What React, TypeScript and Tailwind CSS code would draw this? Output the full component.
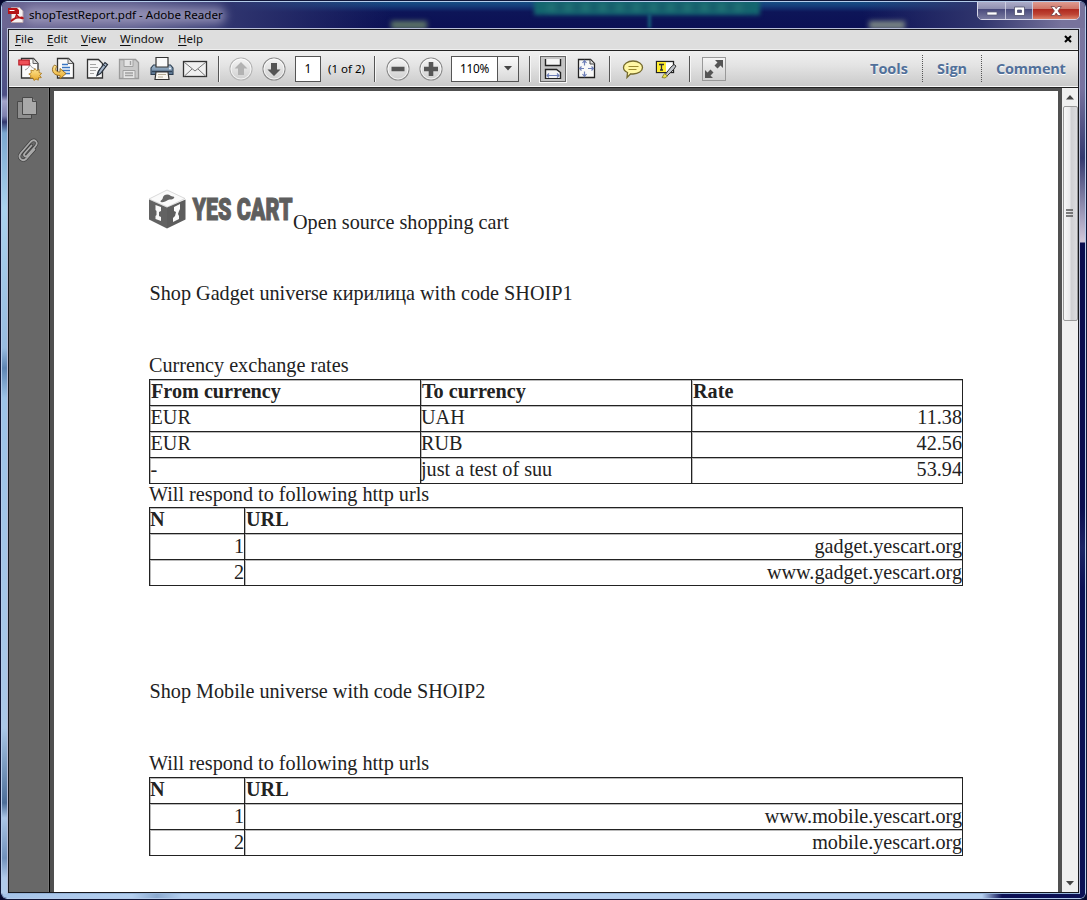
import React from "react";

const Sep = ({ className }: { className: string }) => (
  <div className={`h-[26px] w-[2px] shrink-0 border-l border-[#555] bg-[#f6f6f6] ${className}`} />
);

const Round = ({ className, children, faded }: { className: string; children: React.ReactNode; faded?: boolean }) => (
  <svg className={`shrink-0 ${className}`} width="24" height="24" viewBox="0 0 24 24">
    <circle cx="12" cy="12" r="11" fill="url(#ring)" stroke={faded ? "#b4b4b4" : "#8a8a8a"} strokeWidth="1.1" />
    <circle cx="12" cy="12" r="10" fill="none" stroke="#fff" strokeOpacity=".7" />
    <g fill={faded ? "#b2b2b2" : "#555"}>{children}</g>
  </svg>
);

const PdfIcon = () => (
  <svg className="shrink-0" width="16" height="16" viewBox="0 0 16 16">
    <path d="M3.500.5h8l3.500 3.500v11.500H3.500z" fill="#f5f1f1" stroke="#b9a5ac" />
    <path d="M0 1h9l2 2v4H0z" fill="#b51418" />
    <path d="M4 13.500c3-1.500 5-5 5-9 0-2-1.500-1-1 1 .6 3 3 5.500 6 6 1.800.2 1-1.500-1-1.300-3 .2-6 .8-8.500 2.300-1.500 1-1.500 2-.5 1z" fill="none" stroke="#b51418" strokeWidth="1.500" />
    <path d="M1.500 3.500h5" stroke="#fff" strokeWidth="1.200" />
  </svg>
);

const Title = () => (
  <div className="relative flex h-[26px] shrink-0 items-center overflow-hidden bg-[linear-gradient(180deg,#174e84_0,#153c79_4px,#0d1558_10px,#0c1054_100%)]">
    <div className="absolute inset-0 bg-[linear-gradient(90deg,#6c6693_0,#5d5d8d_130px,#30356f_225px,transparent_390px,transparent_860px,#30356d_980px,#77739c_1060px)]" />
    <div className="absolute top-[5px] left-[22px] h-[17px] w-[202px] rounded-full bg-[#aaa5c5]/70 blur-[5px]" />
    <div className="absolute -top-[3px] left-[532px] h-[16px] w-[226px] bg-[#14666f] blur-[2px]" />
    <div className="absolute top-[3px] left-[545px] h-[5px] w-[200px] bg-[repeating-linear-gradient(90deg,#2b7b7a_0_9px,#175368_9px_17px)] blur-[3px]" />
    <div className="absolute top-[12px] left-[646px] h-[14px] w-[3px] bg-[#165f7a] blur-[1.500px]" />
    <div className="absolute top-[19px] left-[389px] h-[8px] w-[36px] bg-[#5c7467] blur-[2.500px]" />
    <div className="absolute top-[19px] left-[867px] h-[8px] w-[36px] bg-[#7a8584] blur-[2.500px]" />
    <div className="relative mb-px ml-[6px] flex items-center gap-[5px]">
      <PdfIcon />
      <span className="w-[200px] whitespace-nowrap text-[11.600px] leading-4 text-black">shopTestReport.pdf - Adobe Reader</span>
    </div>
    <div className="absolute top-[-3px] right-[5px] flex h-[21px] overflow-hidden rounded-b-[5px] border border-[#d8d8e8] text-white">
      <div className="flex w-[28px] justify-center border-r border-[#d8d8e8]/80 bg-[linear-gradient(180deg,#b6b5cf_0,#8e8eb0_48%,#4a4b7d_50%,#787a9f_100%)]">
        <svg width="27" height="20"><path d="M9 12h10v3H9z" fill="#fff" stroke="#555770" strokeWidth=".7" /></svg>
      </div>
      <div className="flex w-[27px] justify-center border-r border-[#d8d8e8]/80 bg-[linear-gradient(180deg,#b6b5cf_0,#8e8eb0_48%,#4a4b7d_50%,#787a9f_100%)]">
        <svg width="26" height="20"><path fillRule="evenodd" d="M8.500 7h10v8.500h-10zM11.500 10v2.500h4V10z" fill="#fff" stroke="#50526c" strokeWidth=".8" /></svg>
      </div>
      <div className="flex w-[46px] justify-center bg-[linear-gradient(180deg,#e3a69c_0,#cf7466_48%,#b02a20_50%,#bd4334_75%,#dc8169_100%)]">
        <svg width="46" height="20"><path d="M18 6.500h3.500l1.700 2.200 1.700-2.200h3.500l-3.400 4.400 3.400 4.600h-3.500l-1.700-2.400-1.700 2.400H18l3.400-4.600z" fill="#fff" stroke="#734249" strokeWidth=".8" /></svg>
      </div>
    </div>
  </div>
);

const Item = ({ k, rest, className }: { k: string; rest: string; className: string }) => (
  <span className={className}><u className="underline-offset-2">{k}</u>{rest}</span>
);

const Menu = () => (
  <div className="flex h-[20px] shrink-0 items-center border-b border-white/50 bg-[#dedede] pb-[2px] pl-[6px] text-[11.500px] text-[#111]">
    <Item className="w-[32px]" k="F" rest="ile" />
    <Item className="w-[34px]" k="E" rest="dit" />
    <Item className="w-[39px]" k="V" rest="iew" />
    <Item className="w-[58px]" k="W" rest="indow" />
    <Item className="w-[40px]" k="H" rest="elp" />
    <svg className="mt-px mr-[6px] ml-auto" width="8" height="8" viewBox="0 0 8 8"><path d="M1 1l6 6M7 1L1 7" stroke="#000" strokeWidth="2.100" /></svg>
  </div>
);

const Toolbar = () => (
  <div className="flex h-[36px] shrink-0 items-center border-b border-[#f5f5f5] bg-[linear-gradient(180deg,#f0f0f0_0,#e4e4e4_40%,#cacaca_100%)] text-black">
    <svg width="0" height="0" className="absolute">
      <defs>
        <linearGradient id="ring" x1="0" y1="0" x2="0" y2="1"><stop offset="0" stopColor="#f5f5f5" /><stop offset="1" stopColor="#cfcfcf" /></linearGradient>
        <linearGradient id="gold" x1="0" y1="0" x2="0" y2="1"><stop offset="0" stopColor="#ffe896" /><stop offset="1" stopColor="#e9a92b" /></linearGradient>
        <linearGradient id="steel" x1="0" y1="0" x2="0" y2="1"><stop offset="0" stopColor="#a8bfd4" /><stop offset="1" stopColor="#587390" /></linearGradient>
      </defs>
    </svg>
    <svg className="ml-[9px] shrink-0" width="25" height="25" viewBox="0 0 25 25">
      <path d="M3.500 2.500h12l4.500 5v14.500H3.500z" fill="#fbfbfb" stroke="#333" strokeWidth="1.300" />
      <path d="M15 2.500v5h5" fill="#ddd" stroke="#666" />
      <path d="M7 14c3-1 5-4 5-7M12 9c1 2 3 3 5 4" stroke="#999" fill="none" />
      <rect x=".8" y="4" width="10.500" height="5" fill="#ee5158" stroke="#b3141e" />
      <path d="M17 12.500l1.500 2.200 2.800-1-.3 2.800 2.700.9-2 1.900 1.600 2.300-2.900.2-.1 2.400-2.300-1.200-2 1.500-1-2.500-2.900.1.900-2.500-2.200-1.500 2.500-1.300-.4-2.700 2.600.7z" fill="url(#gold)" stroke="#a87516" strokeWidth=".8" />
    </svg>
    <svg className="ml-[8px] shrink-0" width="25" height="25" viewBox="0 0 25 25">
      <path d="M6.500 2.500h11l5 5v14.500h-16z" fill="#fbfbfb" stroke="#333" strokeWidth="1.300" />
      <path d="M17 2.500v5h5" fill="#ddd" stroke="#666" />
      <path d="M11 8.500h6M11 11.500h8M11 14.500h8M13 17.500h6" stroke="#3b77c4" strokeWidth="1.300" />
      <path d="M3.500 9C0 12 .5 19.500 9 19.500V23l6-5.500-6-5V16c-4.500 0-5.500-3-3-5.500z" fill="url(#gold)" stroke="#8e671f" strokeWidth=".9" />
    </svg>
    <svg className="ml-[9px] shrink-0" width="24" height="25" viewBox="0 0 24 25">
      <path d="M2.500 3.500h11l4 4V22h-15z" fill="#f6f6f6" stroke="#333" strokeWidth="1.300" />
      <path d="M5 8.500h6M5 11.500h8M5 14.500h6M5 17.500h4" stroke="#a4a4a4" />
      <path d="M12 19.500l1.200-4L20 6.500l2.500 2-7 9z" fill="#a6b6c9" stroke="#29323e" strokeWidth="1.200" />
      <path d="M12 19.500l3-7M18 8.500l3 2.300" stroke="#29323e" />
    </svg>
    <svg className="ml-[9px] shrink-0" width="22" height="22" viewBox="0 0 22 22">
      <path d="M1.500 1.500h16l3 3v16h-19z" fill="#c9c9c9" stroke="#9b9b9b" strokeWidth="1.300" />
      <path d="M6 1.500h9v7H6zM5 12.500h12v8H5z" fill="#e5e5e5" stroke="#a0a0a0" />
      <path d="M12.500 3v4M7 15h8M7 17.500h8" stroke="#a0a0a0" strokeWidth="1.400" />
    </svg>
    <svg className="ml-[10px] shrink-0" width="24" height="25" viewBox="0 0 24 25">
      <path d="M3.500 9h17l2.500 3v6.500H1V12z" fill="url(#steel)" stroke="#2b3d51" strokeWidth="1.100" />
      <path d="M6 1.500h12V11H6z" fill="#fafafa" stroke="#333" strokeWidth="1.200" />
      <path d="M2 15.500h20" stroke="#304358" strokeWidth="1.600" />
      <path d="M6 16h12l1 7.500H5z" fill="#f8f6f0" stroke="#333" strokeWidth="1.200" />
      <path d="M8 18.500h8M8 21h5" stroke="#b7ad97" />
      <circle cx="20" cy="12.500" r=".9" fill="#fff" />
    </svg>
    <svg className="ml-[8px] shrink-0" width="26" height="18" viewBox="0 0 26 18">
      <rect x="1.500" y="1.500" width="23" height="15" fill="#f0f0f0" stroke="#333" strokeWidth="1.300" />
      <path d="M2 2l11 9L24 2M2.500 16L10 9M23.500 16L16 9" fill="none" stroke="#777" />
    </svg>
    <Sep className="ml-[10px]" />
    <Round className="ml-[9px]" faded><path d="M12 5l6.500 6.500H15V18H9v-6.500H5.500z" /></Round>
    <Round className="ml-[9px]"><path d="M12 19l-6.500-6.500H9V6h6v6.500h3.500z" /></Round>
    <div className="ml-[9px] flex h-[26px] w-[26px] shrink-0 items-center justify-center border-[1.500px] border-[#555] bg-white text-[12px]">1</div>
    <span className="ml-[7px] w-[46px] shrink-0 whitespace-nowrap text-[11.500px]">(1 of 2)</span>
    <Sep className="ml-0" />
    <Round className="ml-[10px]"><path d="M5.500 9.800h13v4.500h-13z" /></Round>
    <Round className="ml-[9px]"><path d="M9.700 5h4.600v4.700H19v4.600h-4.700V19H9.700v-4.700H5V9.700h4.700z" /></Round>
    <div className="ml-[8px] flex h-[26px] w-[68px] shrink-0 items-center border border-[#555] bg-white text-[11.800px]">
      <span className="w-[45px] text-center tracking-[-0.2px]">110%</span>
      <span className="flex h-full flex-1 items-center justify-center border-l border-[#555] bg-[linear-gradient(180deg,#fafafa,#d8d8d8)]">
        <svg width="8" height="5"><path d="M0 0h8L4 4.500z" fill="#444" /></svg>
      </span>
    </div>
    <Sep className="ml-[10px]" />
    <div className="ml-[9px] flex size-[26px] shrink-0 items-center justify-center border border-[#666] bg-[#c4c4c4] shadow-[0_0_0_1px_#f8f8f8]">
      <svg width="20" height="24" viewBox="0 0 20 24" fill="none">
        <path d="M2.500 2v6.500h15V2M2.500 22v-9.500h11l4 3V22" fill="#f4f4f4" stroke="#222" strokeWidth="1.400" />
        <path d="M2 21.500h16" stroke="#222" />
        <path d="M3.500 18.500h13M6 16.500l-2 2 2 2M14 16.500l2 2-2 2" stroke="#6f80b8" strokeWidth="1.100" />
      </svg>
    </div>
    <svg className="ml-[11px] shrink-0" width="20" height="22" viewBox="0 0 20 22" fill="none">
      <path d="M1.500 1.500h12l4 4v14h-16z" fill="#f8f8f8" stroke="#222" strokeWidth="1.300" />
      <path d="M13 1.500v4.500h4.500" fill="#ddd" stroke="#444" />
      <path d="M7.500 2.500v5M5.500 5l2-2.500 2 2.500M7.500 18.500v-5M5.500 16l2 2.500 2-2.500M2 10.500h5M4.500 8.500l-2 2 2 2M17 10.500h-6M14.500 8.500l2 2-2 2" stroke="#6f80b8" strokeWidth="1.200" />
    </svg>
    <Sep className="ml-[12px]" />
    <svg className="ml-[11px] shrink-0" width="22" height="20" viewBox="0 0 22 20">
      <path d="M11 2c5.500 0 9.500 3 9.500 6.500S16.500 15 11 15c-.8 0-1.500 0-2.300-.2L5 18.500l.5-5C3 12.500 1.500 10.500 1.500 8.500 1.500 5 5.500 2 11 2z" fill="#fff7a5" stroke="#746a2d" strokeWidth="1.300" />
      <path d="M6.500 7.500h10M6.500 10.500h8" stroke="#9b892e" strokeWidth="1.200" />
    </svg>
    <svg className="ml-[11px] shrink-0" width="23" height="20" viewBox="0 0 23 20">
      <rect x="1.500" y="2.500" width="17" height="11" fill="#fff" stroke="#222" strokeWidth="1.300" />
      <path d="M2 3h9v10H2z" fill="#ffed2f" />
      <path d="M4 5.500h5M6.500 5.500V11M5 11h3" stroke="#333" strokeWidth="1.300" />
      <path d="M9 17l7-9 3-2.500 2 1.500-2 3-7 7z" fill="#bec2c8" stroke="#333" />
      <path d="M7 18.500l2.500-4 3 2.500-2.500 2z" fill="#efe344" stroke="#777225" strokeWidth=".8" />
    </svg>
    <Sep className="ml-[11px]" />
    <svg className="ml-[10px] shrink-0" width="26" height="26" viewBox="0 0 26 26">
      <rect x="1.500" y="1.500" width="23" height="23" fill="url(#ring)" stroke="#999" />
      <path d="M22 4v8l-2.500-2.500-3 3-3-3 3-3L14 4zM4 22v-8l2.500 2.500 3-3 3 3-3 3L12 22z" fill="#555" />
    </svg>
    <div className="mr-[13px] ml-auto flex h-[27px] items-center font-['Open_Sans',sans-serif] text-[14.500px] font-bold text-[#51709a] [text-shadow:0_1px_0_#fff]">
      <span className="w-[52px] whitespace-nowrap">Tools</span>
      <span className="flex h-full w-[59px] items-center border-l border-dotted border-[#555] pl-[14px]">Sign</span>
      <span className="flex h-full w-[84px] items-center border-l border-dotted border-[#555] pl-[14px] tracking-[-0.2px]">Comment</span>
    </div>
  </div>
);

const Logo = () => (
  <svg width="144" height="42" viewBox="0 0 144 42" className="shrink-0 overflow-visible">
    <path d="M0 10L18 1l18 8.500L18.500 18z" fill="#fafafa" stroke="#ccc" strokeWidth=".7" />
    <path d="M0 10.500l18 8v21L0 30.500z" fill="#626262" />
    <path d="M36.500 10.500l-18.500 8v21l18.500-9z" fill="#5d5d5d" />
    <path d="M14 8c2-3 5-3 8-1 2 1 4 0 3 2s-4 1-6 2-5 3-7 2 2-2 2-5z" fill="#666" />
    <path d="M6.500 16l5.500 2v4l-2 1v4l2 1v4l-5.500-2v-3l1-1v-4l-1-1zM31 15l-6 3v4l2 1-1 4-2 2v4l6-3v-3l-1-2 1-3 1-2z" fill="#fafafa" />
    <text x="43.500" y="30.500" fontFamily="Roboto, sans-serif" fontWeight="900" fontSize="31" fill="#5e5e5e" stroke="#5e5e5e" strokeWidth="1.100" textLength="100" lengthAdjust="spacingAndGlyphs">YES CART</text>
  </svg>
);

const cell = "border-r border-b border-[#222] whitespace-nowrap shadow-[inset_1px_1px_0_#22222250]";

const Rates = () => (
  <div className="grid w-[814px] auto-rows-[26px] grid-cols-[271px_271px_271px] border-t border-l border-[#222] leading-[22px]">
    {["From currency", "To currency", "Rate"].map((t) => <div key={t} className={`${cell} pl-px font-bold`}>{t}</div>)}
    {[["EUR", "UAH", "11.38"], ["EUR", "RUB", "42.56"], ["-", "just a test of suu", "53.94"]].map((r) => (
      <React.Fragment key={r[2]}>
        <div className={`${cell} pl-[0.500px]`}>{r[0]}</div>
        <div className={cell}>{r[1]}</div>
        <div className={`${cell} text-right`}>{r[2]}</div>
      </React.Fragment>
    ))}
  </div>
);

const Urls = ({ urls }: { urls: string[] }) => (
  <div className="grid w-[814px] auto-rows-[26px] grid-cols-[95px_718px] border-t border-l border-[#222]">
    <div className={`${cell} leading-[22px] font-bold`}>N</div>
    <div className={`${cell} pl-px leading-[22px] font-bold`}>URL</div>
    {urls.map((u, i) => (
      <React.Fragment key={u}>
        <div className={`${cell} text-right leading-[24px]`}>{i + 1}</div>
        <div className={`${cell} text-right leading-[24px]`}>{u}</div>
      </React.Fragment>
    ))}
  </div>
);

const Page = () => (
  <div className="min-w-0 flex-1 overflow-hidden bg-white pl-[95px] font-['Liberation_Serif',serif] text-[20.200px] leading-[20px] text-[#222]">
    <div className="mt-[98px] flex h-[43px]">
      <Logo />
      <span className="mt-[23px] whitespace-nowrap">Open source shopping cart</span>
    </div>
    <p className="mt-[51px] pl-[0.500px]">Shop Gadget universe кирилица with code SHOIP1</p>
    <p className="mt-[52px] mb-[4px]">Currency exchange rates</p>
    <Rates />
    <p className="mb-[3px]">Will respond to following http urls</p>
    <Urls urls={["gadget.yescart.org", "www.gadget.yescart.org"]} />
    <p className="mt-[95px] pl-[0.500px]">Shop Mobile universe with code SHOIP2</p>
    <p className="mt-[52px] mb-[4px]">Will respond to following http urls</p>
    <Urls urls={["www.mobile.yescart.org", "mobile.yescart.org"]} />
  </div>
);

const Scrollbar = () => (
  <div className="flex w-[16px] shrink-0 flex-col items-center bg-[#efefef]">
    <div className="flex h-[18px] items-center"><svg width="8" height="5"><path d="M0 4.500L4 0l4 4.500z" fill="#444" /></svg></div>
    <div className="flex h-[215px] w-[15px] items-center justify-center rounded-[2px] border border-[#999] bg-[linear-gradient(90deg,#f6f6f6_0,#e9e9eb_45%,#cfcfd2_55%,#dcdcdf_100%)]">
      <svg width="8" height="9"><path d="M0 1h7M0 4h7M0 7h7" stroke="#555" strokeWidth="1.300" /></svg>
    </div>
    <div className="mt-auto flex h-[17px] items-center"><svg width="8" height="5"><path d="M0 0h8L4 4.500z" fill="#444" /></svg></div>
  </div>
);

const SideBar = () => (
  <div className="flex w-[40px] shrink-0 flex-col items-center border-r border-[#777] bg-[#686868] pt-[7px] pr-[2px]">
    <svg width="23" height="26" viewBox="0 0 23 26">
      <path d="M1.500 6.500h14v17h-14z" fill="#8f8f8f" stroke="#494949" />
      <path d="M6.500 2.500h10l4 4v13h-14z" fill="#a9a9a9" stroke="#494949" />
      <path d="M16.500 2.500v4h4" fill="#8b8b8b" stroke="#494949" />
    </svg>
    <svg className="mt-[16px]" width="24" height="26" viewBox="0 0 24 26" fill="none" strokeLinecap="round">
      <path d="M15.500 8.500l-7 8c-1.500 2 1 4 2.700 2.200l8-9.200C23 5 18.500 1 14.500 5l-9.500 11c-4 5 1.500 9.500 5.500 5.500l8-9" stroke="#3f3f3f" strokeWidth="3.200" />
      <path d="M15.500 8.500l-7 8c-1.500 2 1 4 2.700 2.200l8-9.200C23 5 18.500 1 14.500 5l-9.500 11c-4 5 1.500 9.500 5.500 5.500l8-9" stroke="#a9a9a9" strokeWidth="1.800" />
    </svg>
  </div>
);

export default function App() {
  return (
    <div className="h-[900px] w-[1087px] overflow-hidden bg-[#05072e] font-['Noto_Sans',sans-serif]">
      <div className="flex h-full flex-col overflow-hidden rounded-[7px] border border-[#101638]">
        <div className="flex min-h-0 flex-1 flex-col overflow-hidden rounded-[6px] border border-[#b4cbea] bg-[#0c1055]">
          <Title />
          <div className="flex min-h-0 flex-1">
            <div className="w-[5px] shrink-0 bg-[linear-gradient(180deg,#67648f_0,#4c4f85_67px,#a4a5cb_73px,#7c80ae_88px,#31366d_94px,#7ba7d0_105px,#a9d2ef_180px,#97bbe0_320px,#5e85b3_340px,#9cc3e8_370px,#aac8e8_700px,#4c6d98_775px,#aac5e6_790px,#7090bb_830px,#b0caeb_850px)]" />
            <div className="flex min-w-0 flex-1 flex-col border border-[#b9bfd8] border-b-[#94b3d8]">
              <div className="flex min-h-0 flex-1 flex-col border border-[#17181e]">
                <Menu />
                <div className="h-px shrink-0 bg-[#222]" />
                <Toolbar />
                <div className="h-px shrink-0 bg-[#222]" />
                <div className="flex min-h-0 flex-1 bg-[#505050]">
                  <SideBar />
                  <div className="flex min-w-0 flex-1 border-l border-black pt-[3px] pl-[4px]">
                    <Page />
                    <div className="w-[4px] shrink-0" />
                  </div>
                  <Scrollbar />
                </div>
              </div>
            </div>
            <div className="w-[5px] shrink-0 bg-[linear-gradient(180deg,#7a769f_0,#7873a0_60px,#34396f_130px,#a6a1bf_190px,#d2c8d9_214px,#0a0e4f_215px,#0a0e4f_480px,#1d2566_520px,#0c1055_560px)]" />
          </div>
          <div className="h-[4px] shrink-0 bg-[linear-gradient(90deg,#a5c3e8_0,#b5d0f0_130px,#8ba9cf_155px,#b5d0f0_180px,#b5d0f0_980px,#0c1055_1000px)]" />
        </div>
      </div>
    </div>
  );
}
